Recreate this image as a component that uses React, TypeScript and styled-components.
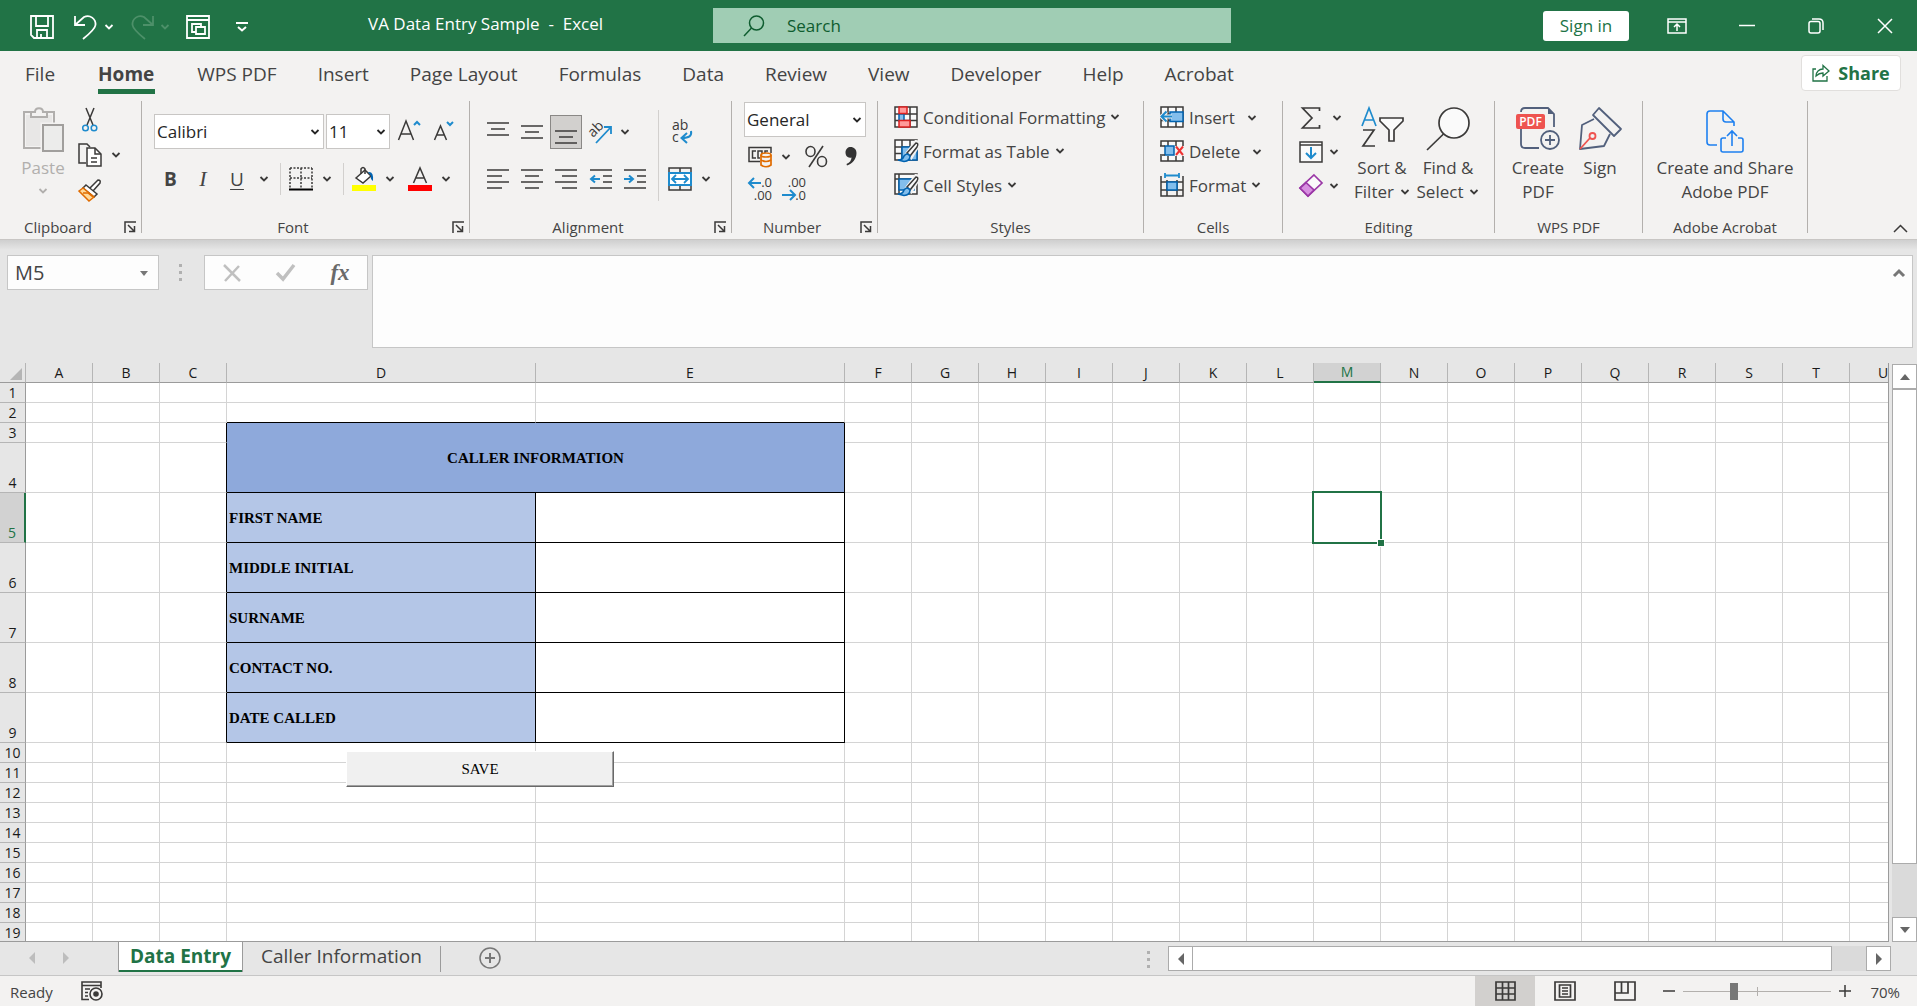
import React from 'react';
import styled, { createGlobalStyle, css } from 'styled-components';

const GREEN = '#217346';
const INK = '#444444';
const LINE = '#3b3a39';
const BLUE = '#1e8bcd';
const BLUE_FILL = '#83beec';
const BLUE_EDGE = '#0063b1';
const UI = '"Open Sans", "Noto Sans", sans-serif';
const SERIF = '"Liberation Serif", "Times New Roman", serif';

const GlobalStyle = createGlobalStyle`
  * { box-sizing: border-box; }
  html, body { margin: 0; padding: 0; }
  body { font-family: ${UI}; font-size: 17px; color: ${INK}; background: #e6e6e6; overflow: hidden; }
  button, input, select, textarea { font: inherit; color: inherit; margin: 0; padding: 0; border: 0; background: none; }
  button { display: inline-flex; align-items: center; justify-content: center; flex: none; white-space: nowrap; }
  svg { display: block; flex: none; overflow: visible; }
`;

const Shell = styled.div`
  display: flex;
  flex-direction: column;
  height: 100vh;
`;

/* ---------- title bar ---------- */

const TitleBar = styled.header`
  display: flex;
  align-items: center;
  flex: none;
  height: 51px;
  background: ${GREEN};
  color: #fff;
`;

const QuickAccess = styled.div`
  display: flex;
  align-items: center;
  width: 368px;
  height: 42px;
  padding: 3px 0 0 30px;
`;

const DocTitle = styled.h1`
  flex: none;
  width: 345px;
  margin: 0;
  padding-bottom: 3px;
  font-size: 17px;
  font-weight: 400;
  line-height: 22px;
  white-space: pre;
`;

const SearchBox = styled.label`
  display: flex;
  align-items: center;
  gap: 22px;
  flex: 0 1 518px;
  height: 35px;
  padding-left: 30px;
  background: #a0cdb4;
  color: #0e5c2f;
  & input { flex: 1; min-width: 0; outline: 0; }
  & input::placeholder { color: #0e5c2f; opacity: 1; }
`;

const WindowControls = styled.div`
  display: flex;
  align-items: center;
  flex: none;
  margin-left: auto;
  padding-right: 24px;
`;

const SignIn = styled.button`
  width: 86px;
  height: 30px;
  margin-right: 38px;
  border-radius: 3px;
  background: #fff;
  color: ${GREEN};
`;

/* ---------- ribbon tabs ---------- */

const TabBar = styled.nav`
  display: flex;
  align-items: center;
  flex: none;
  height: 44px;
  padding: 0 16px 0 5px;
  background: #f3f2f1;
`;

const Tab = styled.button<{ $active?: boolean }>`
  position: relative;
  height: 42px;
  margin: 0 ${(p) => (p.$active ? 2 : 0)}px;
  padding: 2px 21px 0 20px;
  font-size: 19px;
  line-height: 26px;
  font-weight: ${(p) => (p.$active ? 700 : 400)};
  ${(p) =>
    p.$active &&
    css`
      &::after {
        content: '';
        position: absolute;
        left: 20px;
        right: 20px;
        bottom: 0;
        height: 5px;
        background: ${GREEN};
      }
    `}
`;

const ShareButton = styled.button`
  gap: 8px;
  width: 100px;
  height: 36px;
  margin-left: auto;
  border: 1px solid #e1dfdd;
  border-radius: 4px;
  background: #fff;
  color: ${GREEN};
  font-size: 18px;
  font-weight: 700;
`;

/* ---------- ribbon ---------- */

const Ribbon = styled.section`
  display: flex;
  flex: none;
  height: 145px;
  padding: 6px 0;
  background: #f3f2f1;
  border-bottom: 1px solid #c8c6c4;
`;

const GroupBox = styled.section<{ $w: number }>`
  display: flex;
  flex-direction: column;
  flex: none;
  width: ${(p) => p.$w}px;
  border-right: 1px solid #b3b0ad;
`;

const GroupBody = styled.div<{ $pl: number }>`
  display: flex;
  flex: 1;
  min-height: 0;
  padding-left: ${(p) => p.$pl}px;
`;

const GroupFooter = styled.footer`
  display: flex;
  flex: none;
  height: 12px;
  font-size: 15px;
  line-height: 12px;
`;

const GroupLabel = styled.span`
  flex: 1;
  text-align: center;
  white-space: nowrap;
`;

const Launcher = styled.button`
  width: 12px;
  height: 12px;
  margin: 0 5px 0 8px;
`;

const Stack = styled.div<{ $mt?: number; $gap?: number; $ml?: number }>`
  display: flex;
  flex-direction: column;
  align-items: flex-start;
  flex: none;
  gap: ${(p) => p.$gap ?? 0}px;
  margin-left: ${(p) => p.$ml ?? 0}px;
  padding-top: ${(p) => p.$mt ?? 0}px;
`;

const Row = styled.div<{ $h: number; $gap?: number; $pl?: number }>`
  display: flex;
  align-items: center;
  height: ${(p) => p.$h}px;
  gap: ${(p) => p.$gap ?? 0}px;
  padding-left: ${(p) => p.$pl ?? 0}px;
`;

const Tool = styled.button<{ $w?: number; $ml?: number; $on?: boolean }>`
  width: ${(p) => p.$w ?? 24}px;
  height: 34px;
  margin-left: ${(p) => p.$ml ?? 0}px;
  ${(p) => p.$on && 'background: #d2d0ce; border: 1px solid #8a8886;'}
`;

const Letter = styled(Tool)<{ $bold?: boolean; $italic?: boolean; $line?: boolean }>`
  font-size: ${(p) => (p.$italic ? 22 : 19)}px;
  line-height: 22px;
  font-weight: ${(p) => (p.$bold ? 700 : 400)};
  font-style: ${(p) => (p.$italic ? 'italic' : 'normal')};
  font-family: ${(p) => (p.$italic ? SERIF : UI)};
  text-decoration: ${(p) => (p.$line ? 'underline' : 'none')};
  text-underline-offset: 3px;
`;

const Rule = styled.span<{ $h: number }>`
  flex: none;
  width: 1px;
  height: ${(p) => p.$h}px;
  margin: 0 8px 0 7px;
  background: #d2d0ce;
`;

const PickBox = styled.span<{ $w: number; $h: number }>`
  display: grid;
  align-items: center;
  flex: none;
  width: ${(p) => p.$w}px;
  height: ${(p) => p.$h}px;
  border: 1px solid #c8c6c4;
  background: #fff;
  color: #262626;
  & > * { grid-area: 1 / 1; }
  & > select { width: 100%; height: 100%; padding-left: 2px; appearance: none; outline: 0; }
  & > svg { justify-self: end; margin-right: 3px; pointer-events: none; }
`;

const WideTool = styled.button`
  height: 34px;
  gap: 5px;
  padding-bottom: 2px;
`;

const BigTool = styled.button<{ $w: number; $dim?: boolean }>`
  flex-direction: column;
  justify-content: flex-start;
  align-self: flex-start;
  width: ${(p) => p.$w}px;
  padding-top: 6px;
  line-height: 24px;
  color: ${(p) => (p.$dim ? '#b1afad' : INK)};
`;

const BigIcon = styled.span`
  display: block;
  height: 49px;
`;

const BigLine = styled.span`
  display: flex;
  align-items: center;
  gap: 6px;
`;

const Collapse = styled.button`
  align-self: flex-end;
  margin: 0 9px 0 auto;
`;

/* ---------- formula bar ---------- */

const FormulaBar = styled.section`
  display: flex;
  align-items: flex-start;
  flex: none;
  height: 123px;
  padding: 15px 4px 0 7px;
  background: linear-gradient(#cfcfcf, #e6e6e6 10px);
`;

const NameBox = styled.div`
  display: flex;
  width: 152px;
  height: 35px;
  border: 1px solid #c6c6c6;
  background: #fdfdfd;
  & input { flex: 1; min-width: 0; padding-left: 7px; font-size: 20px; outline: 0; }
`;

const Grip = styled.span<{ $m: string }>`
  display: grid;
  gap: 4px;
  flex: none;
  margin: ${(p) => p.$m};
  & i { width: 3px; height: 3px; background: #b0b0b0; }
`;

const FormulaButtons = styled.div`
  display: flex;
  justify-content: space-around;
  align-items: center;
  width: 164px;
  height: 35px;
  border: 1px solid #c6c6c6;
  background: #fdfdfd;
`;

const FxLabel = styled.span`
  font: italic 700 23px/28px ${SERIF};
  color: #6a6a6a;
`;

const FormulaInput = styled.div`
  display: flex;
  align-items: flex-start;
  flex: 1;
  height: 93px;
  margin-left: 4px;
  border: 1px solid #c6c6c6;
  background: #fdfdfd;
  & textarea { flex: 1; height: 100%; resize: none; outline: 0; }
  & button { margin: 12px 7px 0 0; }
`;

/* ---------- sheet ---------- */

const SheetArea = styled.main`
  display: flex;
  flex: 1;
  min-height: 0;
  background: #e6e6e6;
`;

const GridWindow = styled.div`
  flex: 1;
  min-width: 0;
  overflow: hidden;
  border-right: 1px solid #9b9b9b;
  border-bottom: 1px solid #9b9b9b;
  background: #fff;
`;

const Grid = styled.table`
  table-layout: fixed;
  width: 1917px;
  border-collapse: separate;
  border-spacing: 0;
  & th, & td { padding: 0; }
`;

const Corner = styled.th`
  height: 20px;
  background: #e6e6e6;
  border-right: 1px solid #b5b5b5;
  border-bottom: 1px solid #9b9b9b;
  & svg { margin: 4px 0 0 10px; }
`;

const ColHead = styled.th<{ $on?: boolean }>`
  height: 20px;
  font-size: 14px;
  line-height: 18px;
  font-weight: 400;
  color: ${(p) => (p.$on ? GREEN : '#1a1a1a')};
  background: ${(p) => (p.$on ? '#d2d2d2' : '#e6e6e6')};
  border-right: 1px solid #b5b5b5;
  border-bottom: ${(p) => (p.$on ? `2px solid ${GREEN}` : '1px solid #9b9b9b')};
`;

const RowHead = styled.th<{ $h: number; $on?: boolean }>`
  height: ${(p) => p.$h}px;
  font-size: 14px;
  line-height: 18px;
  font-weight: 400;
  vertical-align: bottom;
  color: ${(p) => (p.$on ? GREEN : '#1a1a1a')};
  background: ${(p) => (p.$on ? '#d2d2d2' : '#e6e6e6')};
  border-right: ${(p) => (p.$on ? `2px solid ${GREEN}` : '1px solid #9b9b9b')};
  border-bottom: 1px solid #b5b5b5;
`;

const Cell = styled.td<{ $r?: boolean; $b?: boolean; $fill?: string; $center?: boolean; $anchor?: boolean }>`
  ${(p) => p.$anchor && 'position: relative; z-index: 1;'}
  border-right: 1px solid ${(p) => (p.$r ? '#000' : '#d4d4d4')};
  border-bottom: 1px solid ${(p) => (p.$b ? '#000' : '#d4d4d4')};
  background-color: ${(p) => p.$fill ?? 'transparent'};
  color: #000;
  font: 700 15px/18px ${SERIF};
  text-align: ${(p) => (p.$center ? 'center' : 'left')};
`;

const CellText = styled.span`
  padding-left: 2px;
`;

const Selection = styled.span`
  position: absolute;
  inset: -2px;
  border: 2px solid ${GREEN};
  &::after {
    content: '';
    position: absolute;
    right: -4px;
    bottom: -4px;
    width: 6px;
    height: 6px;
    background: ${GREEN};
    outline: 1px solid #fff;
  }
`;

const SaveButton = styled.button`
  position: absolute;
  top: 8px;
  left: 119px;
  width: 268px;
  height: 36px;
  border: 1px solid;
  border-color: #fff #696969 #696969 #fff;
  box-shadow: inset -1px -1px 0 #a0a0a0;
  background: #f0f0f0;
  font: 400 15px/18px ${SERIF};
`;

const VScroll = styled.div`
  display: flex;
  flex-direction: column;
  flex: none;
  width: 28px;
  padding: 1px 0 0 3px;
`;

const ScrollButton = styled.button`
  width: 25px;
  height: 25px;
  border: 1px solid #ababab;
  background: #fff;
`;

const VTrack = styled.div`
  display: flex;
  flex-direction: column;
  flex: 1;
  background: #dadada;
`;

const VThumb = styled.div`
  height: 90%;
  border: 1px solid #ababab;
  background: #fff;
`;

/* ---------- sheet tabs ---------- */

const SheetBar = styled.section`
  display: flex;
  align-items: flex-start;
  flex: none;
  height: 33px;
  background: #e6e6e6;
`;

const SheetNav = styled.div`
  display: flex;
  align-items: center;
  gap: 22px;
  width: 118px;
  height: 32px;
  padding-left: 26px;
`;

const SheetTab = styled.button<{ $active?: boolean }>`
  height: 30px;
  padding: 0 ${(p) => (p.$active ? 11 : 18)}px 2px;
  font-size: 19px;
  line-height: 26px;
  ${(p) =>
    p.$active &&
    css`
      background: #fff;
      color: ${GREEN};
      font-weight: 700;
      border: solid #9b9b9b;
      border-width: 0 1px;
      box-shadow: inset 0 -2px 0 ${GREEN};
    `}
`;

const TabRule = styled.span`
  width: 1px;
  height: 26px;
  margin-top: 4px;
  background: #9b9b9b;
`;

const AddSheet = styled.button`
  margin: 5px 0 0 38px;
`;

const HScroll = styled.div`
  display: flex;
  flex: 0 1 723px;
  height: 25px;
  margin: 4px 26px 0 0;
`;

const HTrack = styled.div`
  flex: 1;
  background: #dadada;
`;

const HThumb = styled.div`
  width: 95%;
  height: 25px;
  border: solid #ababab;
  border-width: 1px 1px 1px 0;
  background: #fff;
`;

/* ---------- status bar ---------- */

const StatusBar = styled.footer`
  display: flex;
  align-items: center;
  flex: none;
  height: 31px;
  padding: 0 17px 0 10px;
  border-top: 1px solid #c6c6c6;
  background: #f3f2f1;
  font-size: 15px;
`;

const Ready = styled.span`
  width: 71px;
  padding-top: 2px;
`;

const ViewButton = styled.button<{ $on?: boolean }>`
  width: 60px;
  height: 30px;
  background: ${(p) => (p.$on ? '#d2d0ce' : 'transparent')};
`;

const ViewButtons = styled.div`
  display: flex;
  margin-left: auto;
`;

const Zoom = styled.input`
  appearance: none;
  width: 148px;
  height: 20px;
  margin: 0 8px;
  background:
    linear-gradient(#b3b0ad, #b3b0ad) 74px 50% / 1px 9px no-repeat,
    linear-gradient(#b3b0ad, #b3b0ad) 0 50% / 100% 1px no-repeat;
  &::-webkit-slider-thumb { appearance: none; width: 8px; height: 17px; background: #777; }
`;

const Percent = styled.output`
  width: 49px;
  text-align: right;
  padding-top: 2px;
`;

/* ---------- drawings ---------- */

type SvgProps = { w: number; h: number; stroke?: string; sw?: number; children: React.ReactNode };
const Svg = ({ w, h, stroke = LINE, sw = 1.5, children }: SvgProps) => (
  <svg width={w} height={h} viewBox={`0 0 ${w} ${h}`} fill="none" stroke={stroke} strokeWidth={sw} aria-hidden="true">
    {children}
  </svg>
);

const Chevron = ({ color = LINE }: { color?: string }) => (
  <Svg w={10} h={8} stroke={color} sw={1.8}><path d="M1.5 2 L5 5.5 L8.5 2" /></Svg>
);

const Drop = ({ label, ml = 0 }: { label: string; ml?: number }) => (
  <Tool $w={18} $ml={ml} aria-label={label}><Chevron /></Tool>
);

const Triangle = ({ dir, color = '#666' }: { dir: 'up' | 'down' | 'left' | 'right'; color?: string }) => {
  const d = { up: 'M6 3 L11 9 H1Z', down: 'M6 9 L11 3 H1Z', left: 'M3 6 L9 0 V12Z', right: 'M9 6 L3 0 V12Z' }[dir];
  return <Svg w={12} h={12} stroke="none"><path d={d} fill={color} /></Svg>;
};

const SaveIcon = () => (
  <Svg w={24} h={24} stroke="#fff" sw={1.8}>
    <path d="M1 1 H23 V23 H4 L1 20Z M6 1 V11 H18 V1 M7 23 V15 H17 V23 M11 23 V19" />
  </Svg>
);
const UndoIcon = () => (
  <Svg w={24} h={25} stroke="#fff" sw={1.8}><path d="M1 1 V10 H11 M1 10 L10 2 C16 -1 22 4 21.500 10 C21 14 14 20 9 24" /></Svg>
);
const RedoIcon = () => (
  <Svg w={24} h={25} stroke="#4d9069" sw={1.8}><path d="M23 1 V10 H13 M23 10 L14 2 C8 -1 2 4 2.500 10 C3 14 10 20 15 24" /></Svg>
);
const TouchIcon = () => (
  <Svg w={24} h={24} stroke="#fff" sw={1.8}>
    <path d="M1 1 H23 V23 H1Z M1 5 H23 M10 17 H6 V9 H15 V12" /><path d="M10 12 H19 V19 H10Z" />
  </Svg>
);
const CustomizeIcon = () => (
  <Svg w={12} h={10} stroke="#fff" sw={2}><path d="M0 1 H12 M2 5 L6 8.500 L10 5" /></Svg>
);
const SearchIcon = () => (
  <Svg w={22} h={22} stroke="#0e5c2f" sw={1.5}><circle cx="13.500" cy="8" r="7" /><path d="M8.500 13 L1 21" /></Svg>
);
const RibbonModeIcon = () => (
  <Svg w={20} h={16} stroke="#fff"><path d="M1 1 H19 V15 H1Z M1 4 H19 M10 13 V6.500 M7 9 L10 6 L13 9" /></Svg>
);
const MinIcon = () => <Svg w={16} h={16} stroke="#fff"><path d="M0 7.500 H16" /></Svg>;
const RestoreIcon = () => (
  <Svg w={16} h={16} stroke="#fff"><rect x="1" y="3.500" width="11" height="11.500" rx="2" /><path d="M4 1 H11 Q15 1 15 5 V12" /></Svg>
);
const CloseIcon = () => <Svg w={16} h={16} stroke="#fff"><path d="M1 1 L15 15 M15 1 L1 15" /></Svg>;
const ShareIcon = () => (
  <Svg w={18} h={18} stroke={GREEN} sw={1.3}>
    <path d="M4 5 H1 V17 H15 V12" /><path d="M4 12 C4 8 7 5 11 5 V1.500 L17 7 L11 12 V9 C8 9 6 10 4 12Z" />
  </Svg>
);

const PasteIcon = () => (
  <Svg w={42} h={46} stroke="#b1afad" sw={2}>
    <path d="M11 5 H2 V41 H21 M25 5 H32 V17" /><path d="M4 8 H30 V39 H4Z" fill="#e8e7e6" stroke="none" />
    <path d="M9 10 V5 H13 C13 0 21 0 21 5 H25 V10Z" fill="#f3f2f1" />
    <rect x="21" y="18" width="20" height="26" fill="#e8e7e6" stroke="#f3f2f1" strokeWidth={5} />
    <rect x="21" y="18" width="20" height="26" fill="#ececeb" stroke="#a19f9d" />
  </Svg>
);
const CutIcon = () => (
  <Svg w={18} h={24}>
    <path d="M5 1 L12 18 M13 1 L6 18" /><g stroke={BLUE}><circle cx="4.500" cy="21" r="2.800" /><circle cx="13" cy="21" r="2.800" /></g>
  </Svg>
);
const CopyIcon = () => (
  <Svg w={24} h={24}>
    <path d="M8 20 H1 V1 H9 L12 4" /><path d="M9 5 H17 L23 11 V23 H9Z" fill="#fff" />
    <path d="M17 5 V11 H23 M13 15 H19 M13 19 H19" />
  </Svg>
);
const PainterIcon = () => (
  <Svg w={24} h={24}>
    <path d="M11 10 L20 1 Q23 1 22 4 L15 12" fill="#fff" /><path d="M8 6 L19 15 L16 18 L5 9Z" fill="#fff" />
    <path d="M5 9 L1 12 L11 22 L16 18Z" fill="#ffd999" stroke="#e06c00" /><path d="M5 14 L10 14 L15 18" stroke="#e06c00" />
  </Svg>
);
const GrowIcon = ({ small }: { small?: boolean }) => (
  <Svg w={22} h={22}>
    {small ? <path d="M0.500 19 L6.500 5 L12.500 19 M3 14 H10" /> : <path d="M0.500 19 L8 0 L15.500 19 M3 13 H13" />}
    <path d={small ? 'M13 1 L16 4 L19 1' : 'M16 4 L19 1 L22 4'} stroke={BLUE} strokeWidth={2} />
  </Svg>
);
const BorderIcon = () => (
  <Svg w={24} h={24}>
    <path d="M1 1 H23 M1 1 V21 M23 1 V21 M12 1 V21 M1 11 H23" strokeDasharray="2 1.500" />
    <path d="M0 22.500 H24" stroke="#000" strokeWidth={2} />
  </Svg>
);
const FillIcon = () => (
  <Svg w={24} h={24}>
    <path d="M4 11 L13 3 L19 9 L11 16Z" fill="#fff" /><path d="M9 7 V2 Q11 -1 13 2 V7" />
    <path d="M16 5 Q22 4 21 14 Q18 12 19 9Z" fill={BLUE_EDGE} stroke="none" />
    <rect y="18" width="24" height="6" fill="#ff0" stroke="none" />
  </Svg>
);
const FontColorIcon = () => (
  <Svg w={24} h={24}><path d="M5.500 16 L12 1 L18.500 16 M8 11 H16" /><rect y="18" width="24" height="6" fill="#f00" stroke="none" /></Svg>
);
const Lines = ({ rows, y = 0 }: { rows: [number, number][]; y?: number }) => (
  <Svg w={22} h={22}>
    {rows.map(([a, b], i) => <path key={i} d={`M${a} ${y + i * 6 + 2} H${b}`} />)}
  </Svg>
);
const IndentIcon = ({ right }: { right?: boolean }) => (
  <Svg w={22} h={22}>
    <path d="M0 2 H22 M13 8 H22 M13 14 H22 M0 20 H22" />
    <path d={right ? 'M0 11 H9 M5 7.500 L9 11 L5 14.500' : 'M10 11 H1 M5 7.500 L1 11 L5 14.500'} stroke={BLUE} strokeWidth={2} />
  </Svg>
);
const OrientIcon = () => (
  <svg width="26" height="26" viewBox="0 0 26 26" fill="none" aria-hidden="true">
    <text x="6" y="19" transform="rotate(-45 6 19)" fontFamily={UI} fontSize="14" fill={LINE}>ab</text>
    <path d="M9 24 L24 8 M17 8 H24 V15" stroke={BLUE} strokeWidth="1.8" />
  </svg>
);
const WrapIcon = () => (
  <svg width="24" height="28" viewBox="0 0 24 28" fill="none" aria-hidden="true">
    <text x="2" y="12" fontFamily={UI} fontSize="14" fill={LINE}>ab</text>
    <text x="2" y="24" fontFamily={UI} fontSize="14" fill={LINE}>c</text>
    <path d="M21 13 C22 18 19 20 12 20 M17 15 L11.500 20 L17 25" stroke={BLUE} strokeWidth="2" />
  </svg>
);
const MergeIcon = () => (
  <Svg w={24} h={24}>
    <path d="M1 1 H23 V23 H1Z M12 1 V23" /><rect x="1" y="6" width="22" height="12" fill="#fff" stroke={BLUE} strokeWidth={2} />
    <path d="M4 12 H20 M8 8 L4 12 L8 16 M16 8 L20 12 L16 16" stroke={BLUE} strokeWidth={1.8} />
  </Svg>
);
const CurrencyIcon = () => (
  <Svg w={24} h={22}>
    <path d="M23 7 V1.500 H1 V15.500 H12" /><path d="M8 5 H4.500 V12 H8 M14 8 V5 H10 V12 H12 M17 7 V5 H20" />
    <g stroke="#e06c00" strokeWidth={1.700} fill="#f3f2f1"><path d="M13 9 V19 Q18 22.500 23 19 V9" /><ellipse cx="18" cy="9" rx="5" ry="2" /><path d="M13 14 Q18 17 23 14" /></g>
  </Svg>
);
const PercentIcon = () => (
  <Svg w={22} h={24} sw={1.600}><ellipse cx="5.500" cy="6.500" rx="4.500" ry="5" /><ellipse cx="17" cy="16.500" rx="4.500" ry="5" /><path d="M18 1 L4 22" /></Svg>
);
const CommaIcon = () => (
  <Svg w={12} h={20} stroke="none"><path d="M5.500 0 C9 0 11.500 2.500 11.500 6 C11.500 12 7 17 2 18.500 L1.500 17 C5 15.500 6.500 13 6.500 10.500 C3 11.500 0.500 9 0.500 5.500 C0.500 2 3 0 5.500 0Z" fill="#333" /></Svg>
);
const DecimalIcon = ({ less }: { less?: boolean }) => (
  <svg width="24" height="26" viewBox="0 0 24 26" fill="none" aria-hidden="true">
    <text x="24" y="11" textAnchor="end" fontFamily={UI} fontSize="13" fill={LINE}>{less ? '.00' : '.0'}</text>
    <text x="24" y="24" textAnchor="end" fontFamily={UI} fontSize="13" fill={LINE}>{less ? '.0' : '.00'}</text>
    <path d={less ? 'M0 19 H13 M8 14 L13 19 L8 24' : 'M13 7 H1 M6 2 L1 7 L6 12'} stroke={BLUE} strokeWidth="2" />
  </svg>
);

const GridLines = () => <path d="M1 1 H23 V21 H1Z M1 8 H23 M1 14.500 H23 M8 1 V21 M16 1 V21" fill="#fafafa" />;
const CondIcon = () => (
  <Svg w={24} h={22}>
    <GridLines />
    <rect x="5" y="8" width="5" height="7" fill={BLUE_FILL} stroke={BLUE_EDGE} />
    <rect x="5" y="1" width="8" height="6.500" fill="#ff9a9a" stroke="#d22" /><rect x="5" y="14.500" width="11" height="6.500" fill="#ff9a9a" stroke="#d22" />
  </Svg>
);
const Brush = () => (
  <>
    <path d="M13 15 L22 3 Q26 3 23 8 L17 18Z" fill="#fafafa" stroke="#f3f2f1" strokeWidth={4} />
    <path d="M13 14 L22 4 Q25 4 23 8 L16 17Z" fill="#fafafa" />
    <path d="M4 21 Q9 21 10 17 Q13 13 16 17 Q16 22 10 22.500Z" fill={BLUE_FILL} stroke={BLUE_EDGE} />
  </>
);
const TableIcon = () => (
  <Svg w={24} h={24}><GridLines /><rect x="8" y="8" width="15" height="13" fill={BLUE_FILL} stroke={BLUE_EDGE} /><Brush /></Svg>
);
const CellStyleIcon = () => (
  <Svg w={24} h={24}>
    <path d="M1 1 H23 V21 H1Z M1 6 H23 M5 1 V21" fill="#fafafa" /><rect x="5" y="6" width="15" height="11" fill={BLUE_FILL} stroke={BLUE_EDGE} /><Brush />
  </Svg>
);
const InsertIcon = () => (
  <Svg w={24} h={22}>
    <GridLines /><rect x="10" y="6" width="13" height="9.500" fill={BLUE_FILL} stroke={BLUE_EDGE} />
    <path d="M12 10.500 H2 M6.500 5.500 L1.500 10.500 L6.500 15.500" stroke="#f3f2f1" strokeWidth={4} />
    <path d="M12 10.500 H2 M6.500 5.500 L1.500 10.500 L6.500 15.500" stroke={BLUE} strokeWidth={2} />
  </Svg>
);
const DeleteIcon = () => (
  <Svg w={24} h={22}>
    <GridLines /><rect x="0" y="6" width="24" height="10" fill="#f3f2f1" stroke="none" />
    <rect x="5" y="6" width="9" height="9" fill={BLUE_FILL} stroke={BLUE_EDGE} /><path d="M0 6 H5 M0 15 H5" />
    <path d="M16 6.500 L23 15 M23 6.500 L16 15" stroke="#e33" strokeWidth={2} />
  </Svg>
);
const FormatIcon = () => (
  <Svg w={24} h={24}>
    <path d="M1 3 V23 H23 V3 M1 9 H23 M1 17 H23 M7 7 V23 M17 7 V23" /><rect x="7" y="9" width="10" height="8" fill={BLUE_FILL} stroke={BLUE_EDGE} />
    <path d="M5 2.500 H19 M5 0 V5 M19 0 V5" stroke={BLUE} strokeWidth={1.800} />
  </Svg>
);
const SumIcon = () => <Svg w={20} h={22} sw={1.700}><path d="M18.500 4 V1 H1.500 L11 11 L1.500 21 H18.500 V18" /></Svg>;
const FillDownIcon = () => (
  <Svg w={24} h={22}><path d="M1 1 H23 V21 H1Z" fill="#fafafa" /><path d="M1 4 H23" /><path d="M12 6 V17 M7 12 L12 17 L17 12" stroke={BLUE} strokeWidth={2} /></Svg>
);
const EraserIcon = () => (
  <Svg w={24} h={24} stroke="#9a37a6" sw={1.700}><path d="M15 1 L23 9 L9 22 L1 14Z" fill="#fafafa" /><path d="M7 8.500 L15 16 L9 22 L1 14Z" fill="#d78fe0" /></Svg>
);
const SortIcon = () => (
  <Svg w={43} h={42} sw={1.700}>
    <path d="M1 19 L8 1 L15 19 M3.500 13 H12.500" stroke={BLUE} /><path d="M2 23 H13 L2 39 H14" />
    <path d="M19 11 H42 V14 L33 23 V34 H28 V23 L19 14Z" fill="#fafafa" />
  </Svg>
);
const FindIcon = () => (
  <Svg w={44} h={44} sw={1.700}><circle cx="28" cy="16" r="15" fill="#fafafa" /><path d="M17.500 27 L1 43" /></Svg>
);
const PdfIcon = () => (
  <svg width="44" height="43" viewBox="0 0 44 43" fill="none" aria-hidden="true">
    <path d="M5 5 Q5 1 9 1 H32 L38 7 V20 M5 22 V37 Q5 41 9 41 H23" stroke="#52607c" strokeWidth="1.8" />
    <path d="M32 1 L38 7 H32Z" fill="#52607c" />
    <rect x="0" y="7" width="29" height="15" rx="2" fill="#ee5350" />
    <text x="14.500" y="19" textAnchor="middle" fontFamily={UI} fontSize="12" fontWeight="600" fill="#fff">PDF</text>
    <circle cx="34" cy="33" r="9" stroke="#52607c" strokeWidth="1.8" /><path d="M29 33 H39 M34 28 V38" stroke="#52607c" strokeWidth="1.8" />
  </svg>
);
const SignIcon = () => (
  <Svg w={43} h={43} stroke="#52607c" sw={1.800}>
    <path d="M20 1 L42 22 L35 29 L14 8Z M15 12 L3 18 L1 42 L25 39 L31 27" strokeLinejoin="round" />
    <path d="M1 42 L11 31" stroke="#ee5350" /><circle cx="13.500" cy="29" r="3" stroke="#ee5350" />
  </Svg>
);
const AdobeIcon = () => (
  <Svg w={40} h={46} stroke="#1e80f0" sw={1.600}>
    <path d="M12 38 H5 Q2 38 2 35 V7 Q2 4 5 4 H18 L29 15 V19 M18 4 V12 Q18 15 21 15 H29" />
    <path d="M21 31 H18 Q16 31 16 33 V43 Q16 45 18 45 H36 Q38 45 38 43 V33 Q38 31 36 31 H33 M27 39 V24 M22 29 L27 24 L32 29" />
  </Svg>
);
const LauncherIcon = () => (
  <Svg w={12} h={12}><path d="M1 12 V1 H12" /><path d="M4 4 L10 10 M10.500 5 V10.500 H5" /></Svg>
);

/* ---------- ribbon pieces ---------- */

type GroupProps = { label: string; w: number; pl?: number; launcher?: boolean; children: React.ReactNode };
const Group = ({ label, w, pl = 12, launcher, children }: GroupProps) => (
  <GroupBox $w={w} aria-label={label}>
    <GroupBody $pl={pl}>{children}</GroupBody>
    <GroupFooter>
      <GroupLabel>{label}</GroupLabel>
      {launcher && <Launcher aria-label={`${label} settings`}><LauncherIcon /></Launcher>}
    </GroupFooter>
  </GroupBox>
);

const Pick = ({ label, value, w, h = 35 }: { label: string; value: string; w: number; h?: number }) => (
  <PickBox $w={w} $h={h}>
    <select aria-label={label}><option>{value}</option></select>
    <Chevron color="#262626" />
  </PickBox>
);

const FULL: [number, number] = [0, 22];
const MID: [number, number] = [4, 18];

const RibbonPanel = () => (
  <Ribbon>
    <Group label="Clipboard" w={142} pl={21} launcher>
      <BigTool $w={44} $dim>
        <BigIcon><PasteIcon /></BigIcon>
        <span>Paste</span>
        <Svg w={10} h={16} stroke="#b1afad" sw={1.800}><path d="M1.500 9 L5 12.500 L8.500 9" /></Svg>
      </BigTool>
      <Stack $mt={1} $gap={2} $ml={13}>
        <Tool aria-label="Cut"><CutIcon /></Tool>
        <Row $h={34}><Tool aria-label="Copy"><CopyIcon /></Tool><Drop label="Copy options" ml={5} /></Row>
        <Tool aria-label="Format Painter"><PainterIcon /></Tool>
      </Stack>
    </Group>

    <Group label="Font" w={328} launcher>
      <Stack $mt={13} $gap={13}>
        <Row $h={35} $gap={2}>
          <Pick label="Font" value="Calibri" w={170} />
          <Pick label="Font size" value="11" w={64} />
          <Tool $ml={6} $w={22} aria-label="Increase font size"><GrowIcon /></Tool>
          <Tool $ml={12} $w={22} aria-label="Decrease font size"><GrowIcon small /></Tool>
        </Row>
        <Row $h={34}>
          <Letter $w={33} $bold>B</Letter>
          <Letter $w={32} $italic>I</Letter>
          <Letter $w={36} $line>U</Letter>
          <Drop label="Underline options" />
          <Rule $h={32} />
          <Tool aria-label="Borders"><BorderIcon /></Tool>
          <Drop label="Border options" ml={5} />
          <Rule $h={32} />
          <Tool aria-label="Fill color"><FillIcon /></Tool>
          <Drop label="Fill options" ml={5} />
          <Tool $ml={9} aria-label="Font color"><FontColorIcon /></Tool>
          <Drop label="Font color options" ml={5} />
        </Row>
      </Stack>
    </Group>

    <Group label="Alignment" w={262} launcher>
      <Stack $mt={14} $gap={13}>
        <Row $h={34} $gap={2}>
          <Tool $w={32} aria-label="Top align"><Lines rows={[FULL, MID, FULL]} /></Tool>
          <Tool $w={32} aria-label="Middle align"><Lines rows={[FULL, MID, FULL]} y={3} /></Tool>
          <Tool $w={32} $on aria-label="Bottom align"><Lines rows={[FULL, MID, FULL]} y={8} /></Tool>
          <Tool $w={28} $ml={2} aria-label="Orientation"><OrientIcon /></Tool>
          <Drop label="Orientation options" />
        </Row>
        <Row $h={34} $gap={2}>
          <Tool $w={32} aria-label="Align left"><Lines rows={[FULL, [0, 15], FULL, [0, 15]]} /></Tool>
          <Tool $w={32} aria-label="Center"><Lines rows={[FULL, MID, FULL, MID]} /></Tool>
          <Tool $w={32} aria-label="Align right"><Lines rows={[FULL, [7, 22], FULL, [7, 22]]} /></Tool>
          <Tool $w={32} $ml={1} aria-label="Decrease indent"><IndentIcon /></Tool>
          <Tool $w={32} aria-label="Increase indent"><IndentIcon right /></Tool>
        </Row>
      </Stack>
      <Stack $mt={9}><Rule $h={91} /></Stack>
      <Stack $mt={14} $gap={13} $ml={1}>
        <Row $h={34} $pl={2}><Tool aria-label="Wrap text"><WrapIcon /></Tool></Row>
        <Row $h={34}><Tool aria-label="Merge and center"><MergeIcon /></Tool><Drop label="Merge options" ml={5} /></Row>
      </Stack>
    </Group>

    <Group label="Number" w={146} launcher>
      <Stack $mt={1} $gap={8}>
        <Pick label="Number format" value="General" w={122} />
        <Row $h={24} $pl={4}>
          <Tool aria-label="Accounting format"><CurrencyIcon /></Tool>
          <Drop label="Accounting options" ml={5} />
          <Tool $w={22} $ml={10} aria-label="Percent style"><PercentIcon /></Tool>
          <Tool $w={12} $ml={18} aria-label="Comma style"><CommaIcon /></Tool>
        </Row>
        <Row $h={24} $pl={4} $gap={10}>
          <Tool aria-label="Increase decimal"><DecimalIcon /></Tool>
          <Tool aria-label="Decrease decimal"><DecimalIcon less /></Tool>
        </Row>
      </Stack>
    </Group>

    <Group label="Styles" w={266} pl={16}>
      <Stack>
        <WideTool><CondIcon />Conditional Formatting<Chevron /></WideTool>
        <WideTool><TableIcon />Format as Table<Chevron /></WideTool>
        <WideTool><CellStyleIcon />Cell Styles<Chevron /></WideTool>
      </Stack>
    </Group>

    <Group label="Cells" w={139} pl={16}>
      <Stack>
        <Row $h={34} $gap={8}><WideTool><InsertIcon />Insert</WideTool><Drop label="Insert options" /></Row>
        <Row $h={34} $gap={8}><WideTool><DeleteIcon />Delete</WideTool><Drop label="Delete options" /></Row>
        <WideTool><FormatIcon />Format<Chevron /></WideTool>
      </Stack>
    </Group>

    <Group label="Editing" w={212} pl={16}>
      <Stack>
        <Row $h={34} $pl={2}><Tool $w={20} aria-label="AutoSum"><SumIcon /></Tool><Drop label="AutoSum options" ml={7} /></Row>
        <Row $h={34}><Tool aria-label="Fill"><FillDownIcon /></Tool><Drop label="Fill options" ml={2} /></Row>
        <Row $h={34}><Tool aria-label="Clear"><EraserIcon /></Tool><Drop label="Clear options" ml={2} /></Row>
      </Stack>
      <Row $h={120} $pl={3}>
        <BigTool $w={66}>
          <BigIcon><SortIcon /></BigIcon>
          <span>Sort &amp;</span>
          <BigLine>Filter<Chevron /></BigLine>
        </BigTool>
        <BigTool $w={66}>
          <BigIcon><FindIcon /></BigIcon>
          <span>Find &amp;</span>
          <BigLine>Select<Chevron /></BigLine>
        </BigTool>
      </Row>
    </Group>

    <Group label="WPS PDF" w={148} pl={10}>
      <BigTool $w={66}>
        <BigIcon><PdfIcon /></BigIcon>
        <span>Create</span>
        <span>PDF</span>
      </BigTool>
      <BigTool $w={58}>
        <BigIcon><SignIcon /></BigIcon>
        <span>Sign</span>
      </BigTool>
    </Group>

    <Group label="Adobe Acrobat" w={165} pl={8}>
      <BigTool $w={148}>
        <BigIcon><AdobeIcon /></BigIcon>
        <span>Create and Share</span>
        <span>Adobe PDF</span>
      </BigTool>
    </Group>

    <Collapse aria-label="Collapse the ribbon"><Svg w={15} h={9}><path d="M1 8 L7.500 1.500 L14 8" /></Svg></Collapse>
  </Ribbon>
);

/* ---------- sheet data ---------- */

const COLUMNS = 'ABCDEFGHIJKLMNOPQRSTU'.split('');
const ROWS = Array.from({ length: 19 }, (_, i) => i + 1);
const FIELDS: Record<number, string> = {
  5: 'FIRST NAME',
  6: 'MIDDLE INITIAL',
  7: 'SURNAME',
  8: 'CONTACT NO.',
  9: 'DATE CALLED',
};
const rowHeight = (r: number) => (r >= 4 && r <= 9 ? 50 : 20);

const renderCell = (col: string, r: number) => {
  const key = col + r;
  const inForm = r >= 3 && r <= 9;
  if (key === 'D3') {
    return <Cell key={key} colSpan={2} rowSpan={2} $r $b $center $fill="#8ea9db">CALLER INFORMATION</Cell>;
  }
  if (key === 'E3' || key === 'D4' || key === 'E4') return null;
  if (col === 'D' || col === 'E') {
    return (
      <Cell key={key} $anchor={key === 'D10'} $r={inForm} $b={inForm || r === 2} $fill={col === 'D' && FIELDS[r] ? '#b4c6e7' : undefined}>
        {col === 'D' && FIELDS[r] && <CellText>{FIELDS[r]}</CellText>}
        {key === 'D10' && <SaveButton>SAVE</SaveButton>}
      </Cell>
    );
  }
  return <Cell key={key} $anchor={key === 'M5'} $r={col === 'C' && inForm}>{key === 'M5' && <Selection />}</Cell>;
};

const Sheet = () => (
  <SheetArea>
    <GridWindow>
      <Grid>
        <colgroup>
          <col width={26} />
          {COLUMNS.map((c) => <col key={c} width={c === 'D' || c === 'E' ? 309 : 67} />)}
        </colgroup>
        <thead>
          <tr>
            <Corner aria-label="Select all"><Svg w={13} h={13} stroke="none"><path d="M12 0 V12 H0Z" fill="#b5b5b5" /></Svg></Corner>
            {COLUMNS.map((c) => <ColHead key={c} scope="col" $on={c === 'M'}>{c}</ColHead>)}
          </tr>
        </thead>
        <tbody>
          {ROWS.map((r) => (
            <tr key={r}>
              <RowHead scope="row" $h={rowHeight(r)} $on={r === 5}>{r}</RowHead>
              {COLUMNS.map((c) => renderCell(c, r))}
            </tr>
          ))}
        </tbody>
      </Grid>
    </GridWindow>
    <VScroll>
      <ScrollButton aria-label="Scroll up"><Triangle dir="up" /></ScrollButton>
      <VTrack><VThumb /></VTrack>
      <ScrollButton aria-label="Scroll down"><Triangle dir="down" /></ScrollButton>
    </VScroll>
  </SheetArea>
);

const TABS = ['File', 'Home', 'WPS PDF', 'Insert', 'Page Layout', 'Formulas', 'Data', 'Review', 'View', 'Developer', 'Help', 'Acrobat'];

export default function App() {
  return (
    <Shell>
      <GlobalStyle />
      <TitleBar>
        <QuickAccess>
          <Tool aria-label="Save"><SaveIcon /></Tool>
          <Tool $ml={20} aria-label="Undo"><UndoIcon /></Tool>
          <Tool $w={18} $ml={2} aria-label="Undo history"><Chevron color="#fff" /></Tool>
          <Tool $ml={12} aria-label="Redo"><RedoIcon /></Tool>
          <Tool $w={18} $ml={2} aria-label="Redo history"><Chevron color="#4d9069" /></Tool>
          <Tool $ml={12} aria-label="Form"><TouchIcon /></Tool>
          <Tool $w={16} $ml={24} aria-label="Customize toolbar"><CustomizeIcon /></Tool>
        </QuickAccess>
        <DocTitle>{'VA Data Entry Sample  -  Excel'}</DocTitle>
        <SearchBox>
          <SearchIcon />
          <input type="search" placeholder="Search" aria-label="Search" />
        </SearchBox>
        <WindowControls>
          <SignIn>Sign in</SignIn>
          <Tool $w={20} aria-label="Ribbon display options"><RibbonModeIcon /></Tool>
          <Tool $w={16} $ml={52} aria-label="Minimize"><MinIcon /></Tool>
          <Tool $w={16} $ml={53} aria-label="Restore"><RestoreIcon /></Tool>
          <Tool $w={16} $ml={53} aria-label="Close"><CloseIcon /></Tool>
        </WindowControls>
      </TitleBar>

      <TabBar>
        {TABS.map((t) => <Tab key={t} $active={t === 'Home'}>{t}</Tab>)}
        <ShareButton><ShareIcon />Share</ShareButton>
      </TabBar>

      <RibbonPanel />

      <FormulaBar>
        <NameBox>
          <input aria-label="Name box" defaultValue="M5" />
          <Tool $w={28} aria-label="Name list"><Svg w={8} h={5} stroke="none"><path d="M0 0 H8 L4 5Z" fill="#777" /></Svg></Tool>
        </NameBox>
        <Grip $m="9px 22px 0 20px"><i /><i /><i /></Grip>
        <FormulaButtons>
          <Tool aria-label="Cancel"><Svg w={18} h={18} stroke="#c0c0c0" sw={2.500}><path d="M1 1 L17 17 M16 2 L2 17" /></Svg></Tool>
          <Tool aria-label="Enter"><Svg w={20} h={18} stroke="#c0c0c0" sw={3.500}><path d="M1 9 L7 15 L18 1" /></Svg></Tool>
          <Tool aria-label="Insert function"><FxLabel>fx</FxLabel></Tool>
        </FormulaButtons>
        <FormulaInput>
          <textarea aria-label="Formula" />
          <button aria-label="Collapse formula bar"><Svg w={12} h={9} stroke="#777" sw={3}><path d="M1 8 L6 3 L11 8" /></Svg></button>
        </FormulaInput>
      </FormulaBar>

      <Sheet />

      <SheetBar>
        <SheetNav>
          <button aria-label="Previous sheet"><Triangle dir="left" color="#bdbdbd" /></button>
          <button aria-label="Next sheet"><Triangle dir="right" color="#bdbdbd" /></button>
        </SheetNav>
        <SheetTab $active>Data Entry</SheetTab>
        <SheetTab>Caller Information</SheetTab>
        <TabRule />
        <AddSheet aria-label="New sheet">
          <Svg w={22} h={22} stroke="#777"><circle cx="11" cy="11" r="10" /><path d="M6 11 H16 M11 6 V16" strokeWidth={2} /></Svg>
        </AddSheet>
        <Grip $m="9px 18px 0 auto"><i /><i /><i /></Grip>
        <HScroll>
          <ScrollButton aria-label="Scroll left"><Triangle dir="left" /></ScrollButton>
          <HTrack><HThumb /></HTrack>
          <ScrollButton aria-label="Scroll right"><Triangle dir="right" /></ScrollButton>
        </HScroll>
      </SheetBar>

      <StatusBar>
        <Ready>Ready</Ready>
        <button aria-label="Record macro">
          <Svg w={22} h={20} sw={1.600}>
            <path d="M8 18.500 H1 V1 H20 V7 M1 4.500 H20 M4 8 H9 M4 11.500 H7 M4 15 H7" /><circle cx="15" cy="13" r="6" /><circle cx="15" cy="13" r="2" fill={LINE} />
          </Svg>
        </button>
        <ViewButtons>
          <ViewButton $on aria-label="Normal view"><Svg w={21} h={20} sw={1.700}><path d="M1 1 H20 V19 H1Z M1 7 H20 M1 13 H20 M7.500 1 V19 M13.500 1 V19" /></Svg></ViewButton>
          <ViewButton aria-label="Page layout view"><Svg w={22} h={20} sw={1.700}><path d="M1 1 H21 V19 H1Z M5.500 4 H16.500 V16 H5.500Z M8 7 H14 M8 10 H14 M8 13 H14" /></Svg></ViewButton>
          <ViewButton aria-label="Page break preview"><Svg w={22} h={20} sw={1.700}><path d="M1 1 H21 V19 H1Z M1 12 H14 V1 M7.500 1 V12" /></Svg></ViewButton>
        </ViewButtons>
        <Tool $w={12} $ml={8} aria-label="Zoom out"><Svg w={12} h={12}><path d="M0 6 H12" /></Svg></Tool>
        <Zoom type="range" min={10} max={190} defaultValue={70} aria-label="Zoom" />
        <Tool $w={12} aria-label="Zoom in"><Svg w={12} h={12}><path d="M0 6 H12 M6 0 V12" /></Svg></Tool>
        <Percent>70%</Percent>
      </StatusBar>
    </Shell>
  );
}
